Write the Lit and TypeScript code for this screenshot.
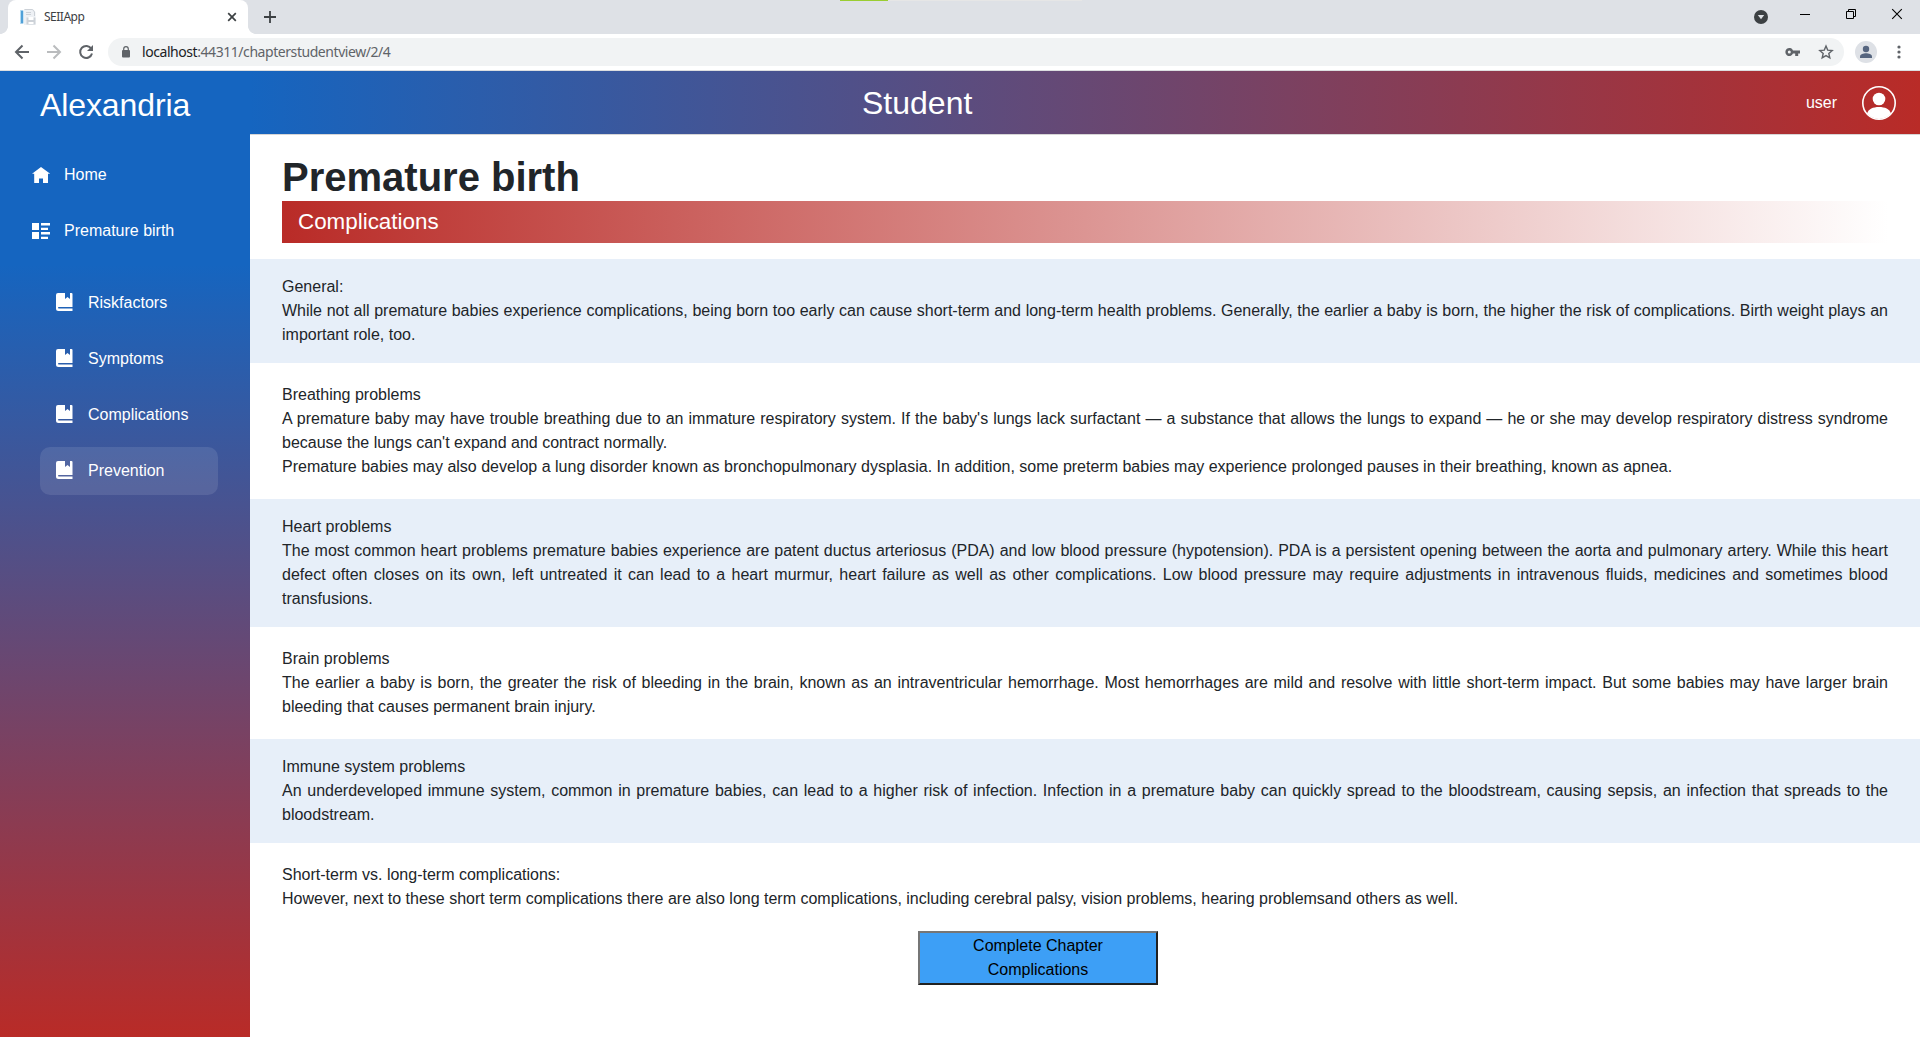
import { LitElement, html, css, svg } from "lit";
import { customElement } from "lit/decorators.js";

interface Section { title: string; lines: string[] }

const sections: Section[] = [
  { title: "General:", lines: ["While not all premature babies experience complications, being born too early can cause short-term and long-term health problems. Generally, the earlier a baby is born, the higher the risk of complications. Birth weight plays an important role, too."] },
  { title: "Breathing problems", lines: [
    "A premature baby may have trouble breathing due to an immature respiratory system. If the baby's lungs lack surfactant — a substance that allows the lungs to expand — he or she may develop respiratory distress syndrome because the lungs can't expand and contract normally.",
    "Premature babies may also develop a lung disorder known as bronchopulmonary dysplasia. In addition, some preterm babies may experience prolonged pauses in their breathing, known as apnea."] },
  { title: "Heart problems", lines: ["The most common heart problems premature babies experience are patent ductus arteriosus (PDA) and low blood pressure (hypotension). PDA is a persistent opening between the aorta and pulmonary artery. While this heart defect often closes on its own, left untreated it can lead to a heart murmur, heart failure as well as other complications. Low blood pressure may require adjustments in intravenous fluids, medicines and sometimes blood transfusions."] },
  { title: "Brain problems", lines: ["The earlier a baby is born, the greater the risk of bleeding in the brain, known as an intraventricular hemorrhage. Most hemorrhages are mild and resolve with little short-term impact. But some babies may have larger brain bleeding that causes permanent brain injury."] },
  { title: "Immune system problems", lines: ["An underdeveloped immune system, common in premature babies, can lead to a higher risk of infection. Infection in a premature baby can quickly spread to the bloodstream, causing sepsis, an infection that spreads to the bloodstream."] },
  { title: "Short-term vs. long-term complications:", lines: ["However, next to these short term complications there are also long term complications, including cerebral palsy, vision problems, hearing problemsand others as well."] },
];

const home = svg`<path d="M9 1L0 7.700h2.200V17H7v-4.500h4V17h5V7.700h2.200z"/>`;
const rich = svg`<path d="M0 1h7v7H0zM9 1h9v2.600H9zM9 5.700h7V8H9zM0 10h7v7H0zM9 10h9v2.600H9zM9 14.700h7V17H9z"/>`;
const book = svg`<path d="M2-1H9V5l2.500-2L14 5V-1h1.500q1 0 1 1V13H2.800q-.8 0-.8.700t.8.700H16.500V17H2.500Q0 17 0 14.500V1Q0-1 2-1z"/>`;

@customElement("browser-chrome")
export class BrowserChrome extends LitElement {
  static styles = css`
    :host { display: block; height: 71px; font-family: "Noto Sans", "Open Sans", sans-serif; flex: none; }
    svg { display: block; flex: none; }
    .strip { height: 34px; background: #dee1e6; display: flex; align-items: flex-start; position: relative; }
    .load { position: absolute; left: 840px; top: 0; width: 242px; height: 1px; background: #e6e6e6; }
    .load i { display: block; width: 48px; height: 1px; background: #9acd32; }
    .corner { width: 8px; height: 34px; }
    .corner.l { background: radial-gradient(circle at 0 0, #dee1e6 7.6px, #fff 8.2px) 0 26px / 8px 8px no-repeat; }
    .corner.r { background: radial-gradient(circle at 100% 0, #dee1e6 7.6px, #fff 8.2px) 0 26px / 8px 8px no-repeat; }
    .tab { width: 240px; box-sizing: border-box; height: 34px; background: #fff; border-radius: 8px 8px 0 0; display: flex; align-items: center; padding: 0 11px 0 12px; }
    .name { font-size: 12px; line-height: 16px; color: #3c4043; margin-left: 8px; flex: 1; letter-spacing: -.5px; }
    .plus { margin: 11px 0 0 8px; }
    .win { margin-left: auto; }
    .bar { height: 36px; background: #fff; display: flex; align-items: center; box-sizing: border-box; padding: 0 19px 0 14px; }
    .line { height: 1px; background: #dcdee0; }
    .pill { margin-left: 14px; flex: 1; height: 28px; border-radius: 14px; background: #f1f3f4; display: flex; align-items: center; padding: 0 10px 0 13px; box-sizing: border-box; }
    .url { margin-left: 11px; font-size: 14px; line-height: 20px; color: #5f6368; flex: 1; letter-spacing: -.44px; }
    .url b { font-weight: 400; color: #202124; }
    .fwd { margin-left: 16px; }
    .rel { margin-left: 16px; }
    .star { margin-left: 17px; }
    .who { margin-left: 11px; }
    .dots { margin-left: 20px; }
  `;
  render() {
    return html`
      <div class="strip">
        <span class="corner l"></span>
        <div class="tab">
          <svg width="16" height="16" viewBox="0 0 16 16"><path fill="#eef1f5" d="M4 0h9l2.500 3v13H4z"/><path fill="#4fa0d8" d="M1 1.500h2.300v13H1z"/><path fill="#b5dcf3" d="M0 1h1v14H0z"/><path fill="none" stroke="#ccd1d7" d="M4.500.5h8l2 2.500v4M6 3.500h5M6 5.500h5"/><path fill="#cdd2d8" d="M6.500 8.500h9v7h-9z"/><path fill="#fff" d="M8.500 8h5v3h-5zm0 5h5v2h-5z"/></svg>
          <span class="name">SEIIApp</span>
          <svg width="10" height="10" viewBox="0 0 10 10"><path d="M1.200 1.200l7.600 7.600m0-7.600l-7.600 7.600" stroke="#3c4043" stroke-width="1.700"/></svg>
        </div>
        <span class="corner r"></span>
        <svg class="plus" width="12" height="12" viewBox="0 0 12 12"><path d="M6 0v12M0 6h12" stroke="#3c4043" stroke-width="1.800"/></svg>
        <div class="load"><i></i></div>
        <svg class="win" width="166" height="34" viewBox="0 0 166 34"><circle cx="7" cy="17" r="7" fill="#3c4043"/><path d="M3.800 15h6.400L7 19.200z" fill="#dee1e6"/><path d="M46 14.500h10M92.500 11.500h7v7h-7zM94.500 11.500v-2h7v7h-2" fill="none" stroke="#000"/><path d="M138.200 9.200l9.600 9.600m0-9.600l-9.600 9.600" stroke="#000" stroke-width="1.100"/></svg>
      </div>
      <div class="bar">
        <svg width="16" height="16" viewBox="0 0 16 16"><path d="M15 8H2.500M8.500 1.500L2 8l6.500 6.500" fill="none" stroke="#5f6368" stroke-width="2"/></svg>
        <svg class="fwd" width="16" height="16" viewBox="0 0 16 16"><path d="M1 8h12.500M7.500 1.500L14 8l-6.500 6.500" fill="none" stroke="#babcbe" stroke-width="2"/></svg>
        <svg class="rel" width="16" height="16" viewBox="0 0 16 16"><path d="M13.300 4.800A6 6 0 1 0 14 9.500" fill="none" stroke="#5f6368" stroke-width="2"/><path d="M15 1v6H9z" fill="#5f6368"/></svg>
        <div class="pill">
          <svg width="10" height="12" viewBox="0 0 10 12"><rect x="1" y="4" width="8" height="7.500" rx="1" fill="#5f6368"/><path d="M2.700 4.500V3a2.300 2.300 0 0 1 4.600 0v1.500" fill="none" stroke="#5f6368" stroke-width="1.200"/></svg>
          <span class="url"><b>localhost</b>:44311/chapterstudentview/2/4</span>
          <svg width="16" height="10" viewBox="0 0 16 10"><path fill="#5f6368" fill-rule="evenodd" d="M8 3.400A4 4 0 1 0 8 6.600h2.200V9h3V6.600H15V3.400zM4.300 3.500a1.500 1.500 0 1 1 0 3 1.500 1.500 0 0 1 0-3z"/></svg>
          <svg class="star" width="16" height="16" viewBox="0 0 16 16"><path d="M8 2l1.700 4.100 4.500.4-3.400 3 1 4.400L8 11.600l-3.800 2.300 1-4.400-3.400-3 4.500-.4z" fill="none" stroke="#5f6368" stroke-width="1.400"/></svg>
        </div>
        <svg class="who" width="22" height="22" viewBox="0 0 22 22"><circle cx="11" cy="11" r="11" fill="#dee1e6"/><circle cx="11" cy="8" r="3.200" fill="#56657f"/><path d="M5 17v-1.500c0-2.200 3.500-3.300 6-3.300s6 1.100 6 3.300V17z" fill="#56657f"/></svg>
        <svg class="dots" width="4" height="14" viewBox="0 0 4 14"><g fill="#5f6368"><circle cx="2" cy="2" r="1.600"/><circle cx="2" cy="7" r="1.600"/><circle cx="2" cy="12" r="1.600"/></g></svg>
      </div>
      <div class="line"></div>`;
  }
}

@customElement("side-nav")
export class SideNav extends LitElement {
  static styles = css`
    :host { display: block; width: 250px; flex: none; box-sizing: border-box; background: linear-gradient(180deg, #1565c0 20%, #b92b27 100%); color: #fff; padding: 16px 32px 0 20px; }
    .brand { font-size: 32px; line-height: 36px; padding-left: 20px; letter-spacing: -.1px; }
    .list { display: flex; flex-direction: column; gap: 8px; padding-top: 28px; }
    .list.sub { padding: 24px 0 0 20px; }
    .item { display: flex; align-items: center; height: 48px; border-radius: 10px; padding-left: 12px; line-height: 24px; }
    .sub .item { padding-left: 16px; }
    .item.on { background: rgba(255, 255, 255, .1); }
    .item svg { width: 18px; height: 18px; fill: currentColor; margin-right: 14px; overflow: visible; }
  `;
  row(icon: unknown, text: string, on = false) {
    return html`<div class="item ${on ? "on" : ""}"><svg viewBox="0 0 18 18">${icon}</svg><span>${text}</span></div>`;
  }
  render() {
    return html`
      <div class="brand">Alexandria</div>
      <div class="list">${this.row(home, "Home")}${this.row(rich, "Premature birth")}</div>
      <div class="list sub">${["Riskfactors", "Symptoms", "Complications", "Prevention"].map((t) => this.row(book, t, t === "Prevention"))}</div>`;
  }
}

@customElement("app-root")
export class AppRoot extends LitElement {
  static styles = css`
    :host { display: flex; flex-direction: column; height: 1037px; overflow: hidden; background: #fff; font: 16px/24px "Liberation Sans", Arial, sans-serif; color: #212529; }
    .page { display: flex; flex: 1; min-height: 0; }
    .main { flex: 1; min-width: 0; }
    .top { height: 64px; box-sizing: border-box; border-bottom: 1px solid #d6d5d5; background: linear-gradient(90deg, #1565c0, #b92b27); color: #fff; display: grid; grid-template-columns: 1fr auto; align-items: center; padding: 0 24px 0 612px; }
    .role { font-size: 32px; line-height: 48px; }
    .user { display: flex; align-items: center; gap: 25px; }
    .body { padding-top: 18px; }
    h1 { margin: 0 32px; font-size: 40px; line-height: 48px; font-weight: 700; }
    .band { margin: 0 32px 16px; height: 42px; line-height: 42px; padding-left: 16px; font-size: 22.4px; color: #fff; background: linear-gradient(90deg, #b92b27, #fff); }
    .sec { padding: 20px 32px; text-align: justify; }
    .sec.tint { padding: 16px 32px; background: #e7eff9; }
    .done { display: block; margin-left: 668px; width: 240px; height: 54px; box-sizing: border-box; border: 2px solid; border-color: #767676 #212121 #212121 #767676; padding: 1px 48px; background: #3d9ff6; font: inherit; color: #000; text-align: center; }
  `;
  render() {
    return html`
      <browser-chrome></browser-chrome>
      <div class="page">
        <side-nav></side-nav>
        <div class="main">
          <div class="top">
            <span class="role">Student</span>
            <div class="user"><span>user</span>
              <svg width="34" height="34" viewBox="0 0 34 34"><circle cx="17" cy="17" r="16.200" fill="none" stroke="#fff" stroke-width="1.600"/><circle cx="17" cy="13" r="6.300" fill="#fff"/><path fill="#fff" d="M5 27.500C6.500 23 11 21 17 21s10.500 2 12 6.500A16 16 0 0 1 5 27.500z"/></svg>
            </div>
          </div>
          <div class="body">
            <h1>Premature birth</h1>
            <div class="band">Complications</div>
            ${sections.map((s, i) => html`<div class="sec ${i % 2 ? "" : "tint"}"><div>${s.title}</div>${s.lines.map((l) => html`<div>${l}</div>`)}</div>`)}
            <button class="done">Complete Chapter Complications</button>
          </div>
        </div>
      </div>`;
  }
}
